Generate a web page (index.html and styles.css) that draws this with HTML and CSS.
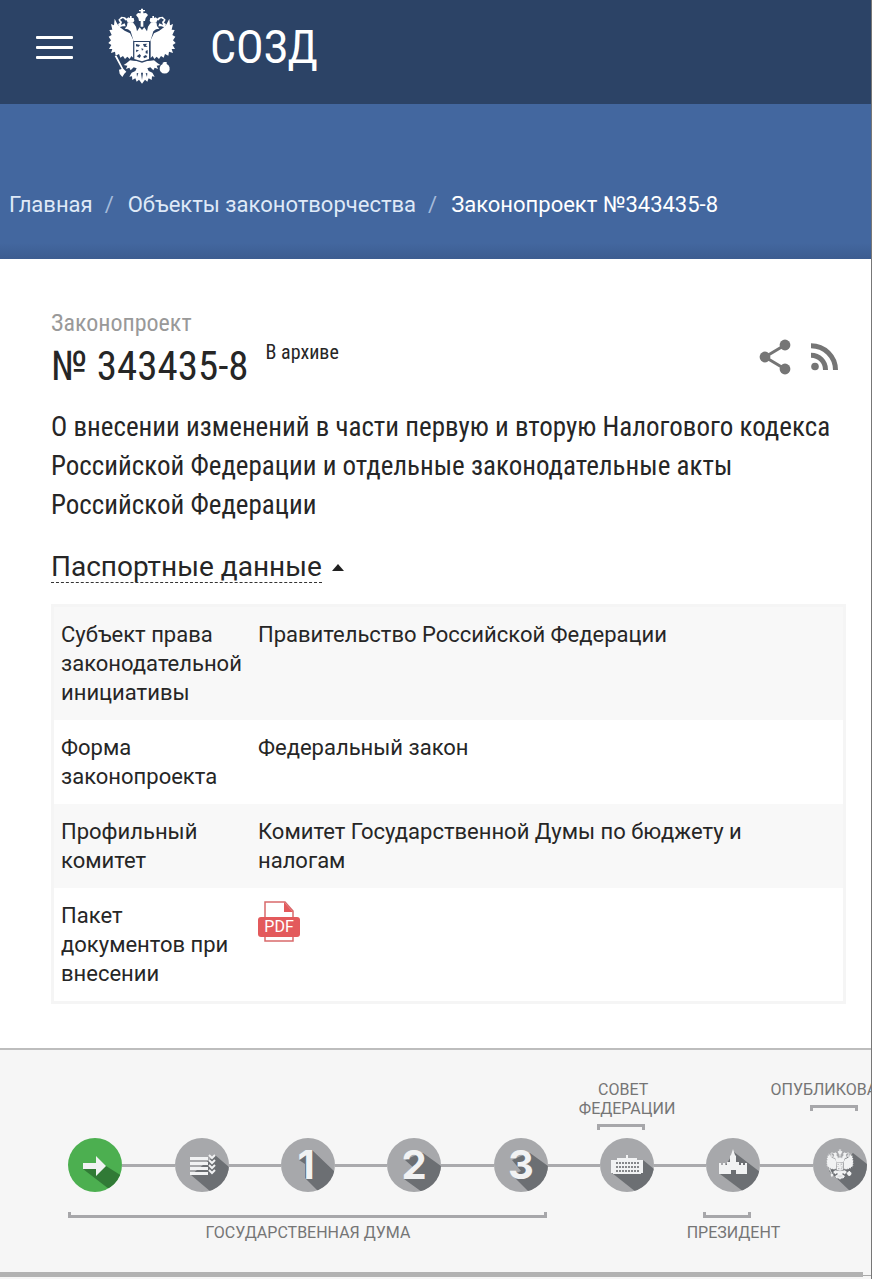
FILE: index.html
```
<!DOCTYPE html>
<html lang="ru">
<head>
    <meta charset="UTF-8">
    <meta name="viewport" content="width=device-width, initial-scale=1.0">
    <title>Законопроект №343435-8</title>
    <link rel="stylesheet" href="styles.css">
</head>
<body>
    <svg width="0" height="0" class="sprite" aria-hidden="true">
        <symbol id="eagle" viewBox="26 22 204 228">
            <g id="eagle-half">
                <!-- wing -->
                <path d="M46 54L54 70L62 80L76 90L92 98L102 118V172L96 166L91 175L84 168L77 175L71 166L63 171L59 160L49 165L47 153L35 157L39 145L29 145L36 133L27 127L35 119L28 108L37 103L30 88L39 87L35 70L44 74Z"/>
                <!-- head, neck -->
                <path d="M76 84L83 76L84 68L92 64L103 68L110 78L113 92L121 80L128 88V122H103L98 105L94 92L86 86Z"/>
                <path d="M85 66L81 55L87 50L92 52L92 46H97V52L103 52L105 60L101 66Z"/>
                <path d="M80 60L71 52L62 57L68 64L65 73L76 68L79 77L70 77L60 80L56 70L62 66L57 57L66 48L77 50L84 56Z"/>
                <!-- leg, tail -->
                <path d="M102 180L92 179L82 187L73 193L84 195L80 205L90 201L94 209L103 200L112 203L108 211L97 216L90 228L98 227L99 238L108 233L112 243L119 237L128 249V182Z"/>
            </g>
            <use href="#eagle-half" transform="translate(256 0) scale(-1 1)"/>
            <path d="M117 52L110 43L116 37L124 38V32H119V28H125V24H131V28H137V32H132V38L140 37L146 43L139 52L137 61H119ZM124 61H132V78H124Z"/>
            <path d="M46 166L52 165L72 204L81 213L75 219L69 229L61 219L59 207L67 205ZM195 184L202 184V190A15 15 0 1 1 190 190V186Z"/>
            <path class="eagle-cut" d="M102 121H152V178L128 186L102 178ZM125 216L128 238L131 216ZM112 218L113 229L117 217ZM144 218L143 229L139 217Z"/>
            <path d="M105 124H149V175L128 182L105 175Z"/>
            <path class="eagle-cut" d="M110 130L122 133L118 138L110 137ZM131 130L144 129L139 134L145 139L134 138ZM110 147L119 149L111 155ZM126 143L133 145L128 150ZM139 151L145 148V159L139 158ZM112 167L121 160L125 165L121 172ZM132 167L140 163L144 169L134 173Z"/>
        </symbol>
    </svg>

    <header class="header">
        <button class="menu-button" aria-label="Меню"><span></span><span></span><span></span></button>
        <svg class="emblem"><use href="#eagle"/></svg>
        <a class="brand" href="#">СОЗД</a>
    </header>

    <nav class="breadcrumbs">
        <a href="#">Главная</a>
        <span class="separator">/</span>
        <a href="#">Объекты законотворчества</a>
        <span class="separator">/</span>
        <span class="current">Законопроект №343435-8</span>
    </nav>

    <main class="bill">
        <div class="bill-head">
            <div>
                <div class="bill-type">Законопроект</div>
                <div class="bill-line">
                    <h1>№ 343435-8</h1>
                    <span class="bill-status">В архиве</span>
                </div>
            </div>
            <div class="bill-actions">
                <button aria-label="Поделиться">
                    <svg width="32" height="36" viewBox="0 0 32 36"><path d="M26 6L6 18L26 30" fill="none" stroke="#757575" stroke-width="3"/><circle cx="26" cy="6" r="5.4"/><circle cx="6" cy="18" r="5.4"/><circle cx="26" cy="30" r="5.4"/></svg>
                </button>
                <button aria-label="RSS">
                    <svg width="28" height="28" viewBox="0 0 28 28"><circle cx="4" cy="23.500" r="3.800"/><path d="M0 12.200A14.500 14.500 0 0 1 14.500 27M0 2.700A24.500 24.500 0 0 1 24.500 27" fill="none" stroke="#757575" stroke-width="5"/></svg>
                </button>
            </div>
        </div>

        <p class="bill-title">О внесении изменений в части первую и вторую Налогового кодекса Российской Федерации и отдельные законодательные акты Российской Федерации</p>

        <button class="passport-toggle" aria-expanded="true"><span>Паспортные данные</span><i class="caret"></i></button>

        <table class="passport">
            <tr>
                <th scope="row">Субъект права законодательной инициативы</th>
                <td>Правительство Российской Федерации</td>
            </tr>
            <tr>
                <th scope="row">Форма законопроекта</th>
                <td>Федеральный закон</td>
            </tr>
            <tr>
                <th scope="row">Профильный комитет</th>
                <td>Комитет Государственной Думы по бюджету и налогам</td>
            </tr>
            <tr>
                <th scope="row">Пакет документов при внесении</th>
                <td>
                    <a href="#" aria-label="PDF">
                        <svg class="pdf" viewBox="0 0 42 42"><path d="M7 16V1H27L35 10V40H7V30" fill="#fff" stroke="#d9696b" stroke-width="1.500"/><path d="M26 1L35 11H26Z" fill="#e35a5c"/><rect y="16" width="42" height="20" rx="3" fill="#e35a5c"/><text x="21" y="31" text-anchor="middle">PDF</text></svg>
                    </a>
                </td>
            </tr>
        </table>
    </main>

    <section class="progress">
        <div class="timeline">
            <div class="label-top council">СОВЕТ&nbsp;&nbsp;<br>ФЕДЕРАЦИИ<span class="bracket"></span></div>
            <div class="label-top published">ОПУБЛИКОВАНИЕ<span class="bracket"></span></div>

            <a class="step active" href="#" aria-label="Внесение"><svg viewBox="0 0 54 54"><path class="shade" d="M15 31L41 51L54 43V38L38 28Z"/><path class="sign" d="M15 25H28V18L38 28L28 38V31H15Z"/></svg></a>
            <a class="step" href="#" aria-label="Рассмотрение"><svg viewBox="0 0 54 54"><path class="shade" d="M16 37L36 54H54V29L40 17Z"/><path class="sign" d="M15 19H33V22H15ZM15 24H33V27H15ZM15 29H33V32H15ZM15 34H33V37H15Z"/><path class="ticks" d="M34 17L37 20L40 17M34 22L37 25L40 22M34 27L37 30L40 27M34 32L37 35L40 32"/></svg></a>
            <a class="step" href="#"><svg viewBox="0 0 54 54"><path class="shade" d="M31 12L54 34V54H38L24 40V26L18 22Z"/><text x="25" y="41" text-anchor="middle">1</text></svg></a>
            <a class="step" href="#"><svg viewBox="0 0 54 54"><path class="shade" d="M36 15L54 28V54H35L17 41L28 31L18 22L27 18Z"/><text x="27" y="41" text-anchor="middle">2</text></svg></a>
            <a class="step" href="#"><svg viewBox="0 0 54 54"><path class="shade" d="M36 15L54 28V54H35L18 37L27 33L18 22L27 18Z"/><text x="27" y="41" text-anchor="middle">3</text></svg></a>
            <a class="step" href="#" aria-label="Совет Федерации"><svg viewBox="0 0 54 54"><path class="shade" d="M12 35L36 54H54V31L43 22Z"/><path class="sign" d="M11 22H17V20H26V17H28V20H37V22H43V35H41V36H13V35H11Z"/><path class="windows" d="M16 25H39M16 29H39M16 33H39"/></svg></a>
            <a class="step" href="#" aria-label="Президент"><svg viewBox="0 0 54 54"><path class="shade" d="M14 36L38 54H54V34L28 14Z"/><path class="sign" d="M13 25H15V27H17V25H19V27H21V24H24V18L25 17L27 11L29 17L30 18V24H33V27H35V25H37V27H39V25H41V36H30V32H25V36H13Z"/></svg></a>
            <a class="step" href="#" aria-label="Опубликование"><svg viewBox="0 0 54 54"><path class="shade" d="M16 33L38 54H54V26L40 15Z"/><use class="sign" href="#eagle" x="13" y="11" width="28" height="31"/></svg></a>

            <div class="label-bottom duma"><span class="bracket"></span>ГОСУДАРСТВЕННАЯ ДУМА</div>
            <div class="label-bottom president"><span class="bracket"></span>ПРЕЗИДЕНТ</div>
        </div>
        <div class="scroll-track"><div class="scroll-thumb"></div></div>
    </section>
</body>
</html>
```
FILE: styles.css
```
* {
    box-sizing: border-box;
}
body {
    margin: 0;
    border-right: 1px solid #777;
    background: #fff;
    color: #262626;
    font-family: Roboto, "Liberation Sans", sans-serif;
    font-size: 22px;
    line-height: 29px;
    overflow-x: hidden;
}
a {
    color: inherit;
    text-decoration: none;
}
button {
    padding: 0;
    border: none;
    background: none;
    color: inherit;
    font: inherit;
    cursor: pointer;
}
svg {
    display: block;
}
.sprite {
    position: absolute;
}
.header {
    display: flex;
    align-items: center;
    height: 104px;
    padding: 0 36px 10px;
    background: #2c4366;
    color: #fff;
}
.menu-button {
    display: flex;
    flex-direction: column;
    gap: 7px;
    width: 37px;
}
.menu-button span {
    width: 100%;
    height: 3px;
    border-radius: 1px;
    background: #fff;
}
.emblem {
    --cut: #2c4366;
    width: 70px;
    height: 76px;
    margin: 0 33px 2px 34px;
    fill: #fff;
}
.eagle-cut {
    fill: var(--cut);
}
.brand {
    font-family: "Roboto Condensed", Roboto, sans-serif;
    font-size: 46px;
    line-height: 52px;
}
.breadcrumbs {
    display: flex;
    align-items: flex-end;
    height: 155px;
    padding: 0 9px 40px;
    background: linear-gradient(to top, #3c5c90, #43679f 16px);
    color: #dfe9f7;
}
.breadcrumbs .separator {
    margin: 0 14px 0 12px;
    color: #a5bbdb;
}
.breadcrumbs .current {
    color: #fff;
}
.bill {
    padding: 49px 25px 44px 51px;
}
.bill-head {
    display: flex;
    justify-content: space-between;
    align-items: center;
}
.bill-type {
    color: #999;
    font-family: "Roboto Condensed", Roboto, sans-serif;
    font-size: 24px;
    line-height: 30px;
}
.bill-line {
    display: flex;
    gap: 17px;
}
.bill h1 {
    margin: 0;
    font-family: "Roboto Condensed", Roboto, sans-serif;
    font-size: 41px;
    font-weight: 400;
    line-height: 56px;
}
.bill-status {
    font-family: "Roboto Condensed", Roboto, sans-serif;
    font-size: 20px;
}
.bill-actions {
    display: flex;
    align-items: center;
    gap: 20px;
    padding: 12px 7px 0 0;
}
.bill-actions svg {
    fill: #757575;
}
.bill-title {
    margin: 14px 0 26px;
    font-family: "Roboto Condensed", Roboto, sans-serif;
    font-size: 27px;
    line-height: 39px;
}
.passport-toggle {
    display: flex;
    align-items: center;
    gap: 10px;
    margin-bottom: 21px;
    font-size: 28px;
}
.passport-toggle span {
    border-bottom: 1px dashed #333;
    line-height: 31px;
}
.caret {
    border: 6px solid transparent;
    border-top: 0;
    border-bottom: 7px solid #212121;
}
.passport {
    width: 100%;
    border: 3px solid #f5f5f5;
    border-collapse: separate;
    border-spacing: 0;
}
.passport th,
.passport td {
    padding: 13px 7px;
    text-align: left;
    vertical-align: top;
    font-weight: 400;
}
.passport th {
    width: 197px;
}
.passport td {
    padding-right: 20px;
}
.passport tr:nth-child(odd) {
    background: #f8f8f8;
}
.pdf {
    width: 42px;
    height: 42px;
}
.pdf text {
    fill: #fff;
    font-size: 16px;
}
.progress {
    overflow: hidden;
    border-top: 2px solid #bdbdbd;
    background: #f6f6f6;
}
.timeline {
    display: grid;
    grid-template-columns: repeat(8, minmax(0, 1fr));
    grid-template-rows: 88px 54px 80px;
    width: calc(100% - 20px);
    margin-left: 42px;
    color: #757575;
    font-size: 16px;
    line-height: 19px;
}
.label-top,
.label-bottom {
    display: flex;
    flex-direction: column;
    align-items: center;
    text-align: center;
    white-space: nowrap;
}
.label-top {
    grid-row: 1;
    padding-top: 30px;
}
.label-bottom {
    grid-row: 3;
    padding-top: 20px;
}
.council {
    grid-column: 6;
}
.published {
    grid-column: 8;
}
.duma {
    grid-column: 1 / 6;
}
.president {
    grid-column: 7;
}
.bracket {
    width: 48px;
    height: 6px;
    margin-right: 12px;
    border: 3px solid #a7a7aa;
}
.label-top .bracket {
    margin-top: 6px;
    border-bottom: none;
}
.label-bottom .bracket {
    margin-bottom: 5px;
    border-top: none;
}
.duma .bracket {
    width: auto;
    align-self: stretch;
    margin-left: 26px;
    margin-right: 27px;
}
.step {
    display: flex;
    align-items: center;
    grid-row: 2;
}
.step::before,
.step::after {
    content: "";
    flex: 1;
    height: 3px;
    background: #aaaaad;
}
.step.active::before,
.step:nth-of-type(8)::after {
    visibility: hidden;
}
.step svg {
    --cut: #a7a8ab;
    width: 54px;
    height: 54px;
    border-radius: 50%;
    background: #a7a8ab;
}
.step.active svg {
    background: #4caf50;
}
.shade {
    fill: #6c6f73;
}
.active .shade {
    fill: #317a36;
}
.sign {
    fill: #f1f2f3;
}
.ticks {
    fill: none;
    stroke: #f1f2f3;
    stroke-width: 2;
}
.windows {
    fill: none;
    stroke: #85878a;
    stroke-width: 2;
    stroke-dasharray: 2 1;
}
.step text {
    fill: #f1f2f3;
    font-family: Inter, Arial, sans-serif;
    font-size: 40px;
    font-weight: 700;
}
.scroll-track {
    height: 7px;
    padding-right: 8px;
    background: linear-gradient(#f6f6f6 3px, #aaa 3px, #aaa 4px, #f6f6f6 4px);
}
.scroll-thumb {
    height: 5px;
    background: #b2b2b2;
}
```
